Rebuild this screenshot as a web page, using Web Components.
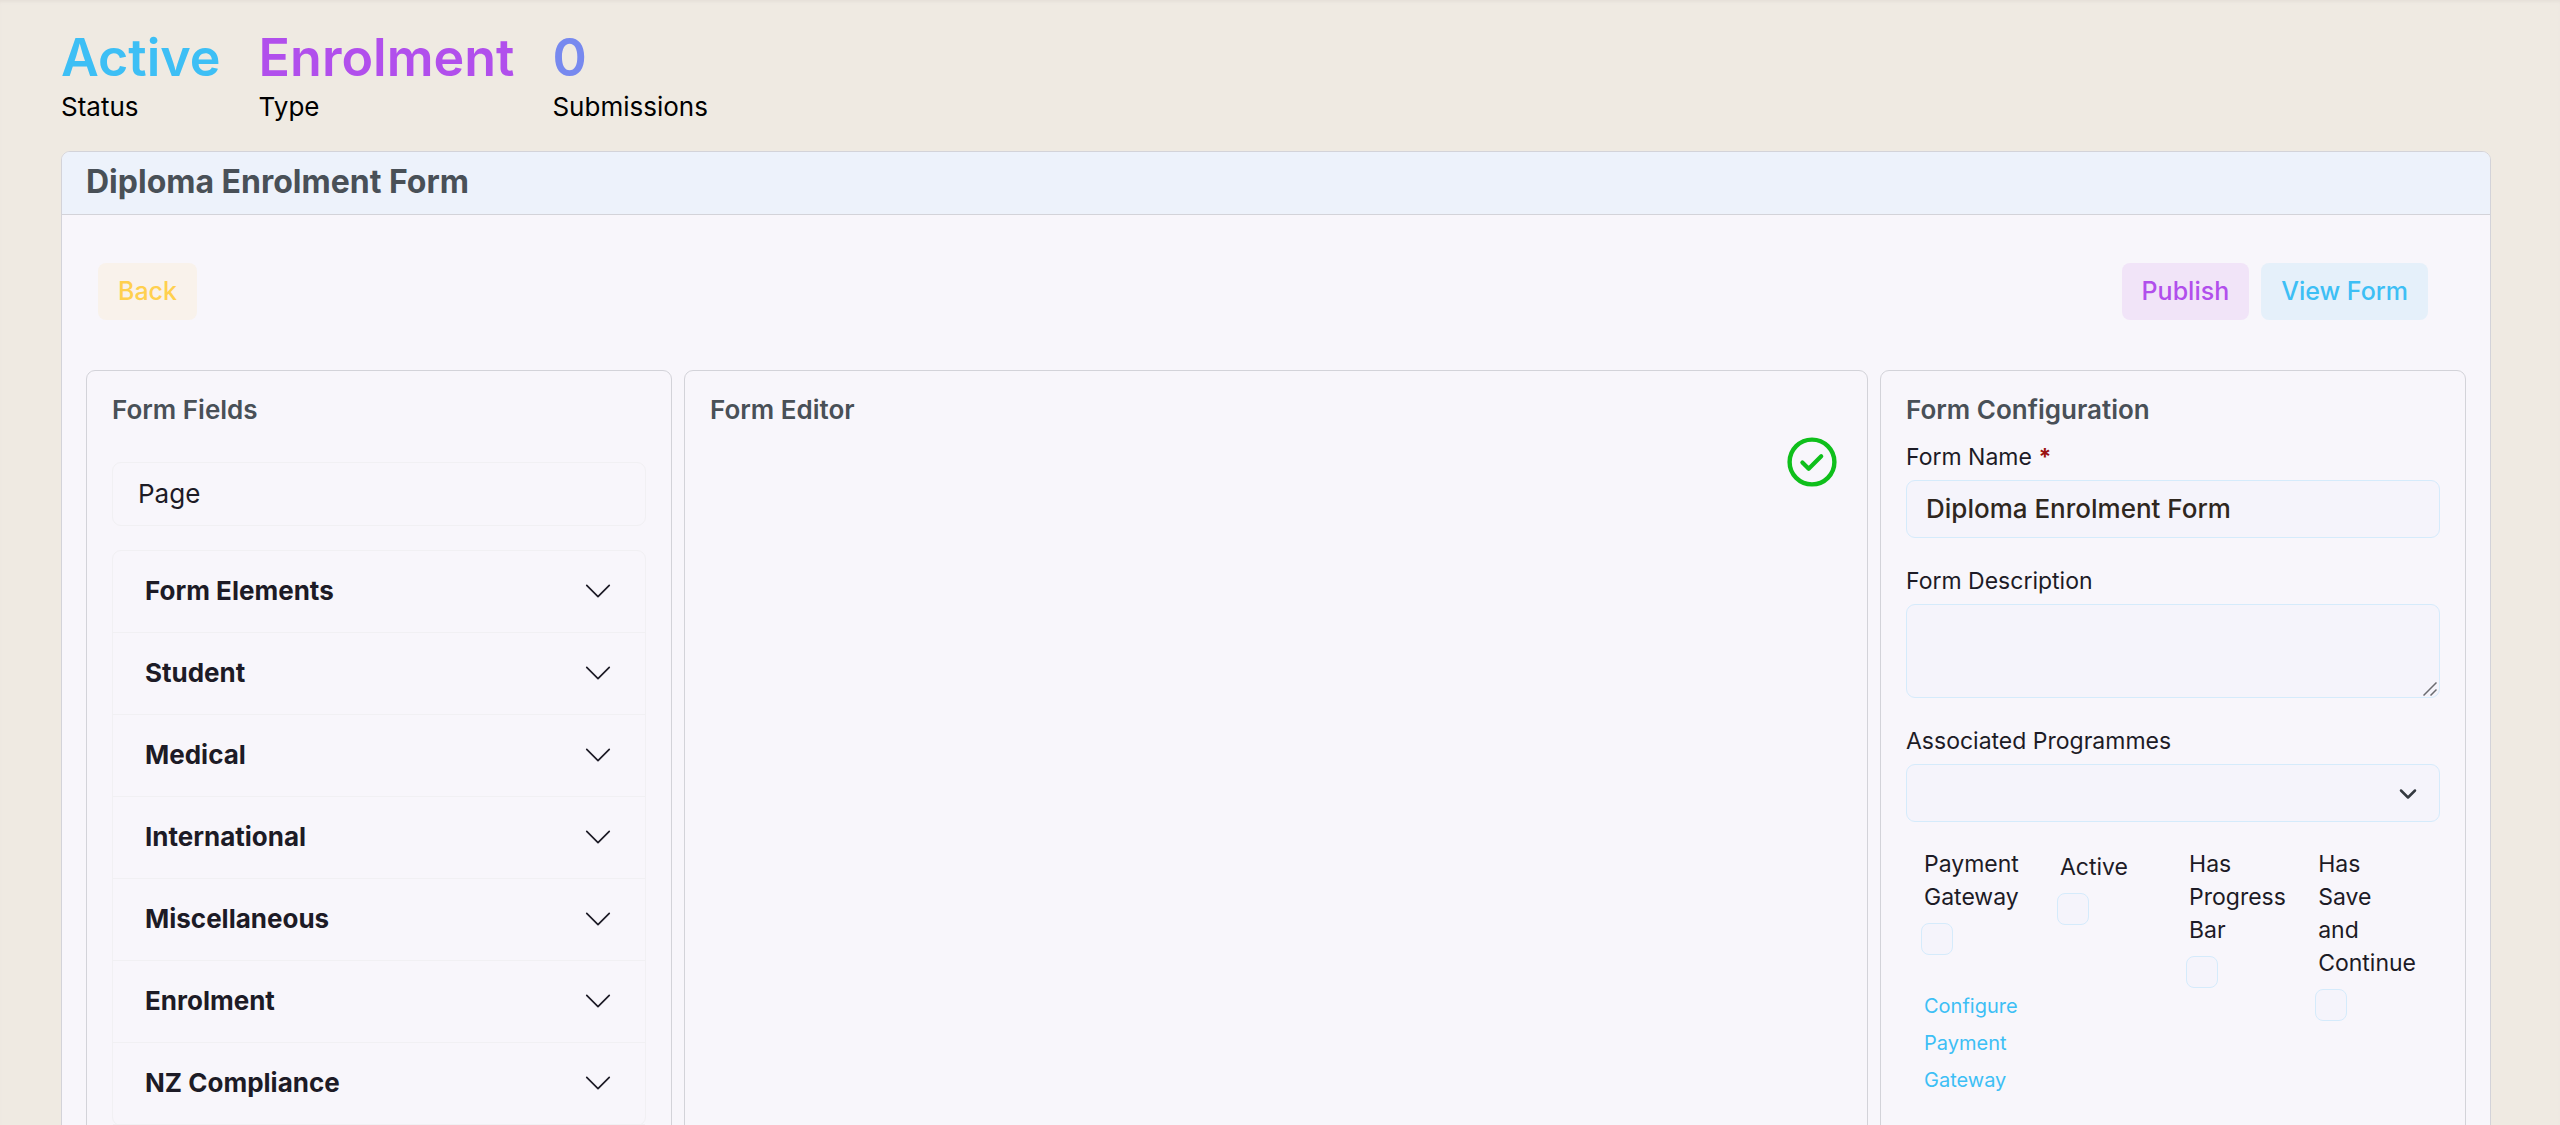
<!DOCTYPE html>
<html lang="en">
<head>
<meta charset="utf-8">
<meta name="viewport" content="width=device-width, initial-scale=1">
<title>Diploma Enrolment Form</title>
<style>
    :root {
        --page: #efeae2;
        --surface: #f8f6fb;
        --line: #d3d3d9;
        --faint: #f1f0f3;
        --field: #f5f4fb;
        --field-line: #d5ebfb;
        --heading: #495057;
        --ink: #1d1b26;
        --blue: #3dbff5;
        --purple: #b14fec;
        --indigo: #7789ef;
        --yellow: #ffd04f;
    }
    body {
        margin: 0;
        background: var(--page);
        color: var(--ink);
        font-family: Inter, "Liberation Sans", sans-serif;
        font-size: 26px;
    }
</style>
</head>
<body>
<form-builder-page></form-builder-page>

<script>
// One figure of the summary on top: big value, small caption.
class StatItem extends HTMLElement {
    constructor() {
        super();
        this.attachShadow({ mode: 'open' });
    }

    connectedCallback() {
        this.shadowRoot.innerHTML = `
            <style>
                :host { display: block; }
                .value { font-size: 52px; line-height: 60px; font-weight: 600; color: var(--stat-color); }
                .caption { font-size: 26px; line-height: 38px; color: #000; }
            </style>
            <div class="value">${this.getAttribute('value')}</div>
            <div class="caption"><slot></slot></div>
        `;
    }
}
customElements.define('stat-item', StatItem);

// Soft coloured button.
class SoftButton extends HTMLElement {
    constructor() {
        super();
        this.attachShadow({ mode: 'open' });
    }

    connectedCallback() {
        this.shadowRoot.innerHTML = `
            <style>
                :host { display: block; }
                button {
                    display: block;
                    padding: 12px 20px;
                    border: 0;
                    border-radius: 8px;
                    background: var(--soft-bg);
                    color: var(--soft-color);
                    font: 500 25px/33px Inter, "Liberation Sans", sans-serif;
                    cursor: pointer;
                }
            </style>
            <button type="button"><slot></slot></button>
        `;
    }
}
customElements.define('soft-button', SoftButton);

// Bordered column with a title.
class FormPanel extends HTMLElement {
    constructor() {
        super();
        this.attachShadow({ mode: 'open' });
    }

    connectedCallback() {
        this.shadowRoot.innerHTML = `
            <style>
                :host {
                    display: block;
                    min-width: 0;
                    margin: 0 6px;
                    padding: 24px 25px;
                    border: 1px solid var(--line);
                    border-radius: 9px;
                }
                h2 { margin: 0; font-size: 26px; line-height: 30px; font-weight: 600; color: var(--heading); }
            </style>
            <h2>${this.getAttribute('heading')}</h2>
            <slot></slot>
        `;
    }
}
customElements.define('form-panel', FormPanel);

// Draggable field and the groups of fields below it.
class FieldPalette extends HTMLElement {
    constructor() {
        super();
        this.attachShadow({ mode: 'open' });
    }

    connectedCallback() {
        const groups = ['Form Elements', 'Student', 'Medical', 'International', 'Miscellaneous', 'Enrolment', 'NZ Compliance'];
        const items = groups.map((name) => `
            <button type="button" aria-expanded="false">
                <span>${name}</span>
                <svg width="30" height="30" viewBox="0 0 16 16" fill="none" stroke="currentColor" stroke-linecap="round" stroke-linejoin="round" stroke-width="0.9" aria-hidden="true"><path d="M2 5l6 6 6-6"/></svg>
            </button>`).join('');

        this.shadowRoot.innerHTML = `
            <style>
                :host { display: block; padding-top: 37px; }
                .field {
                    padding: 12px 25px;
                    border: 1px solid var(--faint);
                    border-radius: 9px;
                    font-size: 26px;
                    line-height: 38px;
                }
                .groups { margin-top: 24px; border: 1px solid var(--faint); border-radius: 9px; }
                button {
                    display: flex;
                    align-items: center;
                    justify-content: space-between;
                    width: 100%;
                    height: 82px;
                    padding: 0 32px 2px;
                    border: 0;
                    border-bottom: 1px solid var(--faint);
                    background: none;
                    color: var(--ink);
                    font: 700 26px/38px Inter, "Liberation Sans", sans-serif;
                    text-align: left;
                }
            </style>
            <div class="field" draggable="true">Page</div>
            <div class="groups">${items}</div>
        `;
    }
}
customElements.define('field-palette', FieldPalette);

// Empty canvas with the saved mark in the corner.
class EditorCanvas extends HTMLElement {
    constructor() {
        super();
        this.attachShadow({ mode: 'open' });
    }

    connectedCallback() {
        this.shadowRoot.innerHTML = `
            <style>
                :host { display: flex; justify-content: flex-end; padding: 12px 5px 0 0; }
            </style>
            <svg width="50" height="50" viewBox="0 0 50 50" fill="none" stroke="#0fbf1b" stroke-linecap="round" stroke-linejoin="round" role="img" aria-label="Saved">
                <circle cx="25" cy="25" r="22.4" stroke-width="4.4"/>
                <path d="M15.4 25.4l6.300 6.300 12.500-12.500" stroke-width="4.200"/>
            </svg>
        `;
    }
}
customElements.define('editor-canvas', EditorCanvas);

// Settings of the form.
class FormConfig extends HTMLElement {
    constructor() {
        super();
        this.attachShadow({ mode: 'open' });
    }

    connectedCallback() {
        this.shadowRoot.innerHTML = `
            <style>
                :host { display: block; padding-top: 17px; }
                .row { margin-bottom: 28px; }
                .row > label { display: block; margin-bottom: 8px; font-size: 23px; line-height: 30px; }
                .required { color: #9b1111; font-weight: 700; }
                .control { position: relative; }
                .control svg { position: absolute; pointer-events: none; }
                .grip { right: 3px; bottom: 2px; }
                .arrow { right: 22px; top: 20px; }
                input[type="text"], textarea, select {
                    display: block;
                    box-sizing: border-box;
                    width: 100%;
                    height: 58px;
                    margin: 0;
                    padding: 8px 19px 10px;
                    border: 1px solid var(--field-line);
                    border-radius: 9px;
                    background: var(--field);
                    color: #2f271e;
                    font: 500 26px/38px Inter, "Liberation Sans", sans-serif;
                    outline: 0;
                }
                textarea { height: 94px; resize: vertical; }
                textarea::-webkit-resizer { display: none; }
                select { appearance: none; }
                .options {
                    display: grid;
                    grid-template-columns: 138fr 131fr 131fr 118fr;
                    align-items: start;
                    margin-top: -2px;
                    padding-left: 15px;
                }
                .option { padding-right: 24px; }
                .option.single { padding-top: 3px; }
                .option label { display: block; padding-left: 3px; font-size: 23px; line-height: 33px; }
                input[type="checkbox"] {
                    appearance: none;
                    display: block;
                    box-sizing: border-box;
                    width: 32px;
                    height: 32px;
                    margin: 9px 0 0;
                    border: 1px solid var(--field-line);
                    border-radius: 8px;
                    background: var(--field);
                }
                input[type="checkbox"]:checked { background: var(--blue); }
                a {
                    display: block;
                    margin-top: 33px;
                    padding-left: 3px;
                    color: var(--blue);
                    font-size: 20px;
                    line-height: 37px;
                    text-decoration: none;
                }
            </style>
            <div class="row">
                <label for="name">Form Name <span class="required">*</span></label>
                <div class="control"><input type="text" id="name" value="Diploma Enrolment Form" required></div>
            </div>
            <div class="row">
                <label for="description">Form Description</label>
                <div class="control">
                    <textarea id="description"></textarea>
                    <svg class="grip" width="14" height="14" viewBox="0 0 14 14" stroke="#6b6b70" stroke-width="1.500" aria-hidden="true"><path d="M0.500 13.500l13-13M7.500 13.500l6-6"/></svg>
                </div>
            </div>
            <div class="row">
                <label for="programmes">Associated Programmes</label>
                <div class="control">
                    <select id="programmes"><option></option></select>
                    <svg class="arrow" width="20" height="20" viewBox="0 0 20 20" fill="none" stroke="#343a40" stroke-width="2.500" stroke-linecap="round" stroke-linejoin="round" aria-hidden="true"><path d="M3 6.500l7 7 7-7"/></svg>
                </div>
            </div>
            <div class="options">
                <div class="option">
                    <label for="payment">Payment Gateway</label>
                    <input type="checkbox" id="payment">
                    <a href="#payment-gateway">Configure Payment Gateway</a>
                </div>
                <div class="option single">
                    <label for="active">Active</label>
                    <input type="checkbox" id="active">
                </div>
                <div class="option">
                    <label for="progress">Has Progress Bar</label>
                    <input type="checkbox" id="progress">
                </div>
                <div class="option">
                    <label for="save">Has Save and Continue</label>
                    <input type="checkbox" id="save">
                </div>
            </div>
        `;
    }
}
customElements.define('form-config', FormConfig);

// Whole page: summary, card, toolbar and the three panels.
class FormBuilderPage extends HTMLElement {
    constructor() {
        super();
        this.attachShadow({ mode: 'open' });
    }

    connectedCallback() {
        this.shadowRoot.innerHTML = `
            <style>
                :host {
                    display: block;
                    box-sizing: border-box;
                    height: 100vh;
                    padding: 28px 69px 24px 61px;
                    overflow-y: auto;
                    scrollbar-width: none;
                    box-shadow: inset 0 3px 3px -1px #e6e0d9;
                }
                .stats { display: flex; gap: 38px; margin-bottom: 25px; }
                .card { border: 1px solid var(--line); border-radius: 9px; background: var(--surface); }
                h1 {
                    margin: 0;
                    padding: 11px 24px 13px;
                    border-bottom: 1px solid var(--line);
                    border-radius: 8px 8px 0 0;
                    background: #edf2fb;
                    color: var(--heading);
                    font-size: 32px;
                    line-height: 38px;
                    font-weight: 700;
                }
                .body { padding: 24px; }
                .toolbar { display: flex; gap: 12px; padding: 24px 38px 50px 12px; }
                .toolbar soft-button:first-child { margin-right: auto; }
                .panels { display: grid; grid-template-columns: 1fr 2fr 1fr; margin: 0 -6px; }
                .active { --stat-color: var(--blue); }
                .type { --stat-color: var(--purple); }
                .count { --stat-color: var(--indigo); }
                .back { --soft-bg: #f9f2eb; --soft-color: var(--yellow); }
                .publish { --soft-bg: #f1e4f8; --soft-color: var(--purple); }
                .view { --soft-bg: #e5f0fa; --soft-color: var(--blue); }
            </style>
            <div class="stats">
                <stat-item class="active" value="Active">Status</stat-item>
                <stat-item class="type" value="Enrolment">Type</stat-item>
                <stat-item class="count" value="0">Submissions</stat-item>
            </div>
            <section class="card">
                <h1>Diploma Enrolment Form</h1>
                <div class="body">
                    <div class="toolbar">
                        <soft-button class="back">Back</soft-button>
                        <soft-button class="publish">Publish</soft-button>
                        <soft-button class="view">View Form</soft-button>
                    </div>
                    <div class="panels">
                        <form-panel heading="Form Fields"><field-palette></field-palette></form-panel>
                        <form-panel heading="Form Editor"><editor-canvas></editor-canvas></form-panel>
                        <form-panel heading="Form Configuration"><form-config></form-config></form-panel>
                    </div>
                </div>
            </section>
        `;
    }
}
customElements.define('form-builder-page', FormBuilderPage);
</script>
</body>
</html>
